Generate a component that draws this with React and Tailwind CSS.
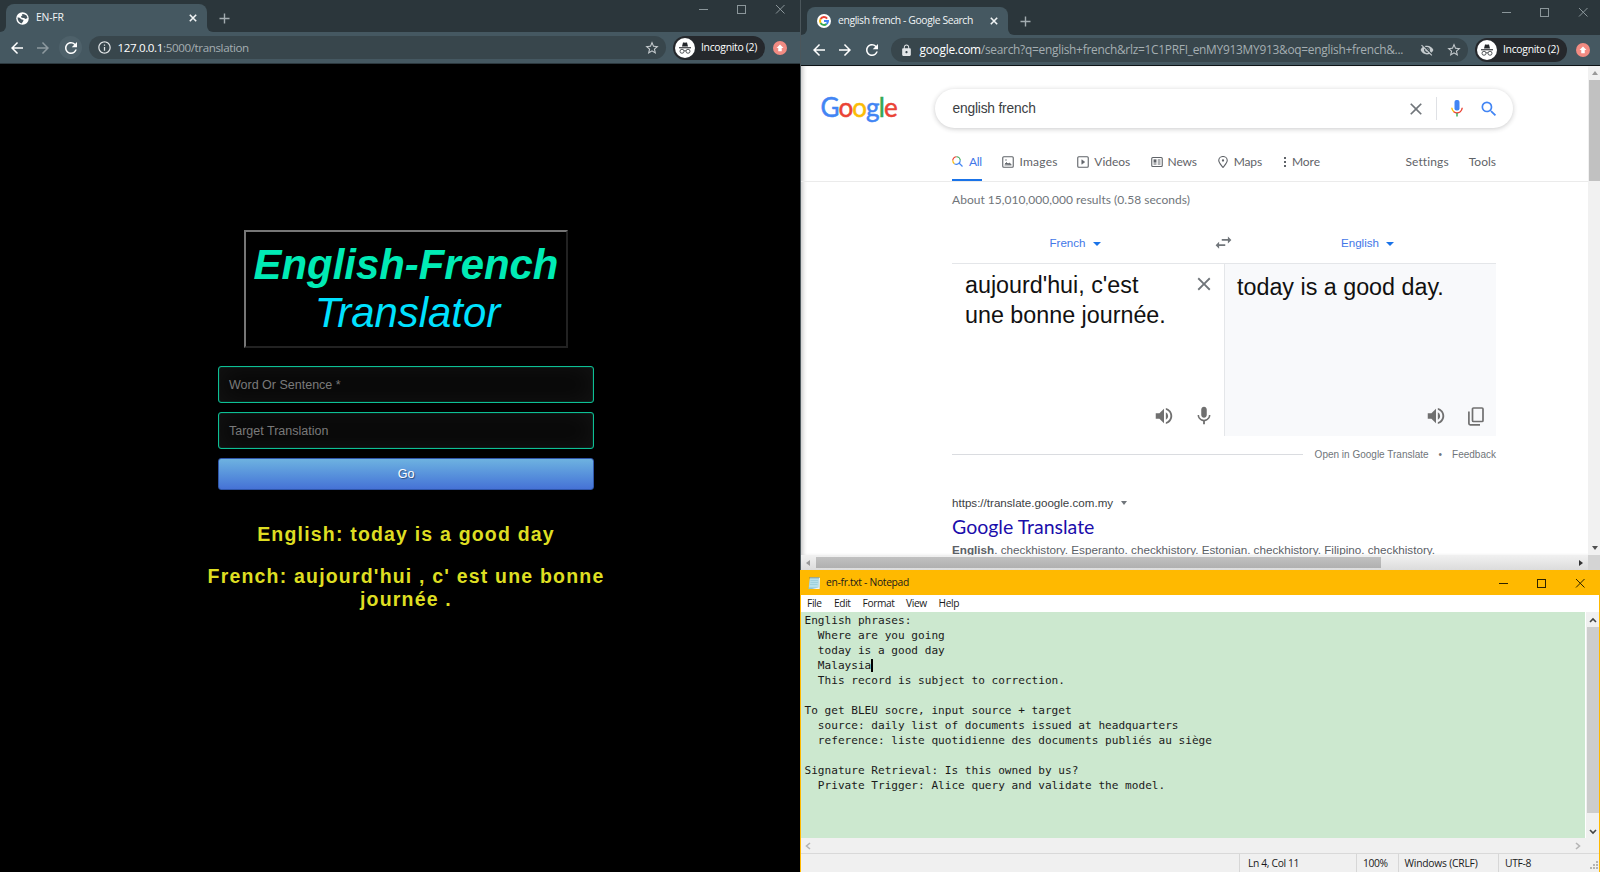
import React from "react";
import {
  MdArrowBack,
  MdArrowForward,
  MdRefresh,
  MdStarBorder,
  MdLock,
  MdInfoOutline,
  MdVisibilityOff,
  MdSearch,
  MdClose,
  MdVolumeUp,
  MdMic,
  MdSwapHoriz,
} from "react-icons/md";

const UI = "font-['Open_Sans','Noto_Sans',sans-serif]";
const ARIAL = "font-['Liberation_Sans',Arial,sans-serif]";
const PRODUCT = "font-[Lato,sans-serif]";

function GlobeIcon() {
  return (
    <svg viewBox="0 0 26 26" className="size-[13px] shrink-0">
      <circle cx="13" cy="13" r="12.5" fill="#fff" />
      <path d="M3 11q4-1 6 2t5 2q2 1 0 4t-3 4C7 22 3 17 3 11z" fill="#45565f" />
      <path d="M12 4q5-1 9 3l2 5-4 2-3-2-5-.5-1-3 3-2z" fill="#45565f" />
    </svg>
  );
}

function GoogleG() {
  return (
    <svg viewBox="0 0 28 28" className="size-[14px] shrink-0">
      <circle cx="14" cy="14" r="14" fill="#fff" />
      <g fill="none" strokeWidth="4">
        <path d="M20.200 9.200A8 8 0 0 0 7.100 10" stroke="#ea4335" />
        <path d="M7.100 10a8 8 0 0 0 0 8" stroke="#fbbc05" />
        <path d="M7.100 18a8 8 0 0 0 12 2" stroke="#34a853" />
        <path d="M19.100 20a8 8 0 0 0 2.900-6h-8" stroke="#4285f4" />
      </g>
    </svg>
  );
}

function IncognitoBadge() {
  return (
    <svg viewBox="0 0 40 40" className="size-5 shrink-0">
      <circle cx="20" cy="20" r="20" fill="#fff" />
      <path d="M14 17l2-8h3l1 .800 1-.8h3l2 8z" fill="#25282c" />
      <path d="M8 19.500h24" stroke="#25282c" strokeWidth="2.200" />
      <g fill="none" stroke="#44484c" strokeWidth="1.800">
        <circle cx="14" cy="26.500" r="4" />
        <circle cx="26" cy="26.500" r="4" />
        <path d="M18 26q2-1.500 4 0" />
      </g>
    </svg>
  );
}

function UpdateBadge() {
  return (
    <svg viewBox="0 0 28 28" className="size-[14px] shrink-0">
      <circle cx="14" cy="14" r="14" fill="#f28b82" />
      <path d="M14 7l7 7h-3.500v6.500h-7V14H7z" fill="#fff" />
    </svg>
  );
}

function WindowButtons({ stroke }) {
  return (
    <svg viewBox="0 0 90 12" className="h-3 w-[90px] shrink-0" fill="none" stroke={stroke} strokeWidth="1">
      <path d="M2 6.500h9" />
      <rect x="40.500" y="2.500" width="8" height="8" />
      <path d="M79 2l8.500 8.500M87.500 2L79 10.500" />
    </svg>
  );
}

function TabStrip({ height, tabTop, plusTop, icon, title, tracking, buttons }) {
  return (
    <div className={`flex shrink-0 items-stretch bg-[#455861] ${height}`}>
      <div className="w-[6px] rounded-br-md bg-[#2b363b]" />
      <div className={`w-[201px] bg-[#2b363b] ${tabTop}`}>
        <div className="flex h-full items-center rounded-t-lg bg-[#455861] pr-[10px] pl-[10px]">
          {icon}
          <span className={`ml-[7px] text-[10.400px] font-medium whitespace-nowrap text-[#f1f4f5] ${tracking}`}>{title}</span>
          <svg viewBox="0 0 8 8" className="ml-auto size-2" stroke="#f1f4f5" strokeWidth="1.600">
            <path d="M.8.8l6.400 6.400M7.200.8L.8 7.200" />
          </svg>
        </div>
      </div>
      <div className="flex grow items-start rounded-bl-md bg-[#2b363b]">
        <svg viewBox="0 0 11 11" className={`ml-[12px] size-[11px] ${plusTop}`} stroke="#a3acb0" strokeWidth="1.400">
          <path d="M5.500.5v10M.5 5.500h10" />
        </svg>
        <div className={`ml-auto ${buttons}`}>
          <WindowButtons stroke="#8b969a" />
        </div>
      </div>
    </div>
  );
}

function IncognitoPill() {
  return (
    <div className="flex h-6 w-[92px] shrink-0 items-center rounded-full bg-[#25282c] pl-[2px]">
      <IncognitoBadge />
      <span className="ml-[6px] text-[10.400px] font-medium tracking-[-0.300px] whitespace-nowrap text-white">Incognito (2)</span>
    </div>
  );
}

const FIELD =
  "flex h-[37px] items-center rounded-[3px] border border-[#0dbf94] bg-[#080808] px-[10px] pt-[2px] text-[#7a7a7a] shadow-[inset_0_0_1px_#0dbf94,inset_0_0_26px_rgba(255,255,255,0.05)]";

function TranslatorWindow() {
  return (
    <section className="flex h-full w-[800px] shrink-0 flex-col bg-black">
      <TabStrip
        height="h-8"
        tabTop="pt-1"
        plusTop="mt-[13px]"
        icon={<GlobeIcon />}
        title="EN-FR"
        tracking="tracking-[-0.200px]"
        buttons="mt-[3px] mr-[13px]"
      />
      <div className="flex h-8 shrink-0 items-center border-b border-[#2c383e] bg-[#455861] pl-[8px]">
        <MdArrowBack className="size-[18px] text-white" />
        <MdArrowForward className="ml-[8px] size-[18px] text-[#8d999f]" />
        <div className="ml-[7px] flex size-[23px] items-center justify-center rounded-full bg-[#4e616a]">
          <MdRefresh className="size-[18px] text-white" />
        </div>
        <div className="ml-[7px] flex h-[23px] w-[577px] items-center rounded-full bg-[#38464c] pl-[8px]">
          <MdInfoOutline className="size-[15px] text-[#dfe3e5]" />
          <span className="ml-[5.500px] text-[11.600px] tracking-[-0.380px] whitespace-nowrap text-[#a5aeb2]">
            <span className="text-white">127.0.0.1</span>:5000/translation
          </span>
          <MdStarBorder className="mr-[6px] ml-auto size-[16px] text-[#c5cbce]" />
        </div>
        <div className="ml-[7px]">
          <IncognitoPill />
        </div>
        <div className="ml-[8px]">
          <UpdateBadge />
        </div>
      </div>

      <main className={`flex grow flex-col items-center pt-[166px] pl-[12px] ${ARIAL}`}>
        <h1 className="h-[118px] w-[324px] border-2 border-t-[#767676] border-r-[#222] border-b-[#222] border-l-[#767676] pt-[9px] text-center text-[41.900px] leading-[48.300px] whitespace-nowrap italic">
          <span className="block font-bold text-[#00ebb5]">English-French</span>
          <span className="ml-[3px] block text-[#00e1ff]">Translator</span>
        </h1>
        <form className="mt-[18px] flex w-[376px] flex-col gap-[9px] text-[12.500px]">
          <div className={FIELD}>Word Or Sentence *</div>
          <div className={FIELD}>Target Translation</div>
          <button
            type="button"
            className="h-8 rounded-[3px] border border-[#2f55a8] bg-linear-to-b from-[#6eb2e0] to-[#4672d6] text-[12.500px] text-white [text-shadow:1px_1px_1px_rgba(0,0,0,0.45)]"
          >
            Go
          </button>
        </form>
        <div className="mt-[32.500px] w-[412px] text-center text-[19.500px] leading-[23px] font-bold tracking-[1.190px] text-[#dede22]">
          <p>English: today is a good day</p>
          <p className="mt-[19px]">French: aujourd'hui , c' est une bonne journée .</p>
        </div>
      </main>
    </section>
  );
}

function GoogleLogo() {
  return (
    <div className={`-mt-[3px] text-[26px] leading-[30px] tracking-[-0.900px] [-webkit-text-stroke:0.5px_currentColor] ${PRODUCT}`}>
      <span className="text-[#4285f4]">G</span>
      <span className="text-[#ea4335]">o</span>
      <span className="text-[#fbbc05]">o</span>
      <span className="text-[#4285f4]">g</span>
      <span className="text-[#34a853]">l</span>
      <span className="text-[#ea4335]">e</span>
    </div>
  );
}

function ColorMic() {
  return (
    <svg viewBox="0 0 24 34" className="h-[17px] w-[12px]" fill="none" strokeWidth="2.800">
      <rect x="7" y="0" width="10" height="21" rx="4" fill="#4285f4" />
      <path d="M1.500 15.500c.5 4 2 6.500 4.500 8.300" stroke="#fbbc05" />
      <path d="M5.500 23.500c4 3 9 3 13 0 2.500-2 3.600-4.500 4-8" stroke="#ea4335" />
      <path d="M12 26v7" stroke="#34a853" />
    </svg>
  );
}

function AllIcon() {
  return (
    <svg viewBox="0 0 22 22" className="size-[11px]" fill="none" strokeWidth="2.400">
      <path d="M1.500 9A7.500 7.500 0 0 1 9 1.500" stroke="#ea4335" />
      <path d="M9 1.500A7.500 7.500 0 0 1 16.500 9" stroke="#34a853" />
      <path d="M1.500 9A7.500 7.500 0 0 0 5 15.300" stroke="#fbbc05" />
      <path d="M16.500 9A7.500 7.500 0 0 1 5 15.300M14.500 14.500l6.500 6.500" stroke="#4285f4" />
    </svg>
  );
}

function TabGlyph({ children }) {
  return (
    <svg viewBox="0 0 24 24" className="size-[12px]" fill="none" stroke="#5f6368" strokeWidth="2.200">
      {children}
    </svg>
  );
}

function SearchTab({ icon, label, className }) {
  return (
    <div className={`flex items-center ${className}`}>
      {icon}
      <span>{label}</span>
    </div>
  );
}

function LanguageLabel({ children }) {
  return (
    <div className="flex items-center gap-[7px] pb-[2px] text-[11.600px] text-[#4277e8]">
      {children}
      <svg viewBox="0 0 8 4" className="mt-[4px] h-1 w-2" fill="#1a73e8">
        <path d="M0 0h8L4 4z" />
      </svg>
    </div>
  );
}

function CopyIcon() {
  return (
    <svg viewBox="0 0 16 19" className="h-[19px] w-4" fill="none" stroke="#707070" strokeWidth="1.700">
      <rect x="4.500" y="1" width="10.500" height="13.500" rx="1" />
      <path d="M.9 4.500V16.500q0 1.300 1.300 1.300H12" />
    </svg>
  );
}

function ResultsPage() {
  return (
    <div className="flex h-[489px] shrink-0 bg-white">
      <div className="flex w-[787px] flex-col overflow-hidden shadow-[inset_4px_0_4px_-2px_rgba(0,0,0,0.22)]">
        <header className="shrink-0 border-b border-[#ebebeb]">
          <div className="flex h-[85px] items-center pl-[19.500px]">
            <GoogleLogo />
            <div className="mr-[75px] ml-auto flex h-[39px] w-[578px] items-center rounded-full bg-white pl-[17.500px] shadow-[0_1px_5px_rgba(32,33,36,0.24)]">
              <span className={`pt-[2px] text-[13.800px] tracking-[-0.200px] text-[#3c4043] ${ARIAL}`}>english french</span>
              <MdClose className="ml-auto size-[20px] text-[#70757a]" />
              <div className="ml-[10px] h-[23px] w-px bg-[#dfe1e5]" />
              <div className="ml-[14px]">
                <ColorMic />
              </div>
              <MdSearch className="mr-[14px] ml-[16px] size-[20px] text-[#4285f4]" />
            </div>
          </div>
          <nav className={`flex h-[30px] text-[12px] text-[#5f6368] ${PRODUCT}`}>
            <div className="ml-[151px] flex border-b-2 border-[#1a73e8] pb-[7px]">
              <SearchTab icon={<AllIcon />} label="All" className="gap-[6px] tracking-[-0.300px] text-[#4277e8]" />
            </div>
            <div className="flex grow pb-[9px]">
              <SearchTab
                className="ml-[20.500px] gap-[5px] tracking-[0.280px]"
                label="Images"
                icon={
                  <TabGlyph>
                    <rect x="1.500" y="1.500" width="21" height="21" rx="2" />
                    <path d="M5 18h14M6 16l3-3 3 3 3-2 3 3z" strokeWidth="1.500" fill="#5f6368" />
                    <path d="M7 8h2" strokeWidth="3" />
                  </TabGlyph>
                }
              />
              <SearchTab
                className="ml-[19.500px] gap-[5px] tracking-[-0.050px]"
                label="Videos"
                icon={
                  <TabGlyph>
                    <rect x="1.500" y="1.500" width="21" height="21" rx="2" />
                    <path d="M9.500 7.500v9l6-4.500z" fill="#5f6368" strokeWidth="1" />
                  </TabGlyph>
                }
              />
              <SearchTab
                className="ml-[20.500px] gap-[5px] tracking-[-0.150px]"
                label="News"
                icon={
                  <TabGlyph>
                    <rect x="1.500" y="3" width="21" height="18" rx="2" />
                    <path d="M5 8h6M5 12h6M5 16h6M13.500 8H19M13.500 12H19M13.500 16H19" strokeWidth="2" />
                    <path d="M8 7.500v5" strokeWidth="5" />
                  </TabGlyph>
                }
              />
              <SearchTab
                className="ml-[20px] gap-[5px] tracking-[-0.200px]"
                label="Maps"
                icon={
                  <TabGlyph>
                    <path d="M12 23C7 16.500 3.500 13 3.500 9a8.500 8 0 0 1 17 0c0 4-3.500 7.500-8.500 14z" />
                    <circle cx="12" cy="9" r="1.200" fill="#5f6368" />
                  </TabGlyph>
                }
              />
              <SearchTab
                className="ml-[22px] gap-[6px] tracking-[-0.050px]"
                label="More"
                icon={
                  <svg viewBox="0 0 2 10" className="h-[10px] w-[2px]" fill="#5f6368">
                    <path d="M0 0h2v2H0zM0 4h2v2H0zM0 8h2v2H0z" />
                  </svg>
                }
              />
              <div className="mr-[92px] ml-auto flex items-center gap-[20px]">
                <span className="tracking-[0.120px]">Settings</span>
                <span>Tools</span>
              </div>
            </div>
          </nav>
        </header>

        <div className={`flex w-[695px] shrink-0 flex-col pl-[151px] ${ARIAL}`}>
          <div className={`mt-[9px] h-[19px] text-[12px] leading-[18px] tracking-[0.030px] whitespace-nowrap text-[#70757a] ${PRODUCT}`}>
            About 15,010,000,000 results (0.58 seconds)
          </div>
          <div className="mt-[14px] flex h-[40px] items-center border-b border-[#e4e6e9]">
            <div className="flex w-[261px] justify-center pr-[15px]">
              <LanguageLabel>French</LanguageLabel>
            </div>
            <MdSwapHoriz className="mb-[2px] size-[21px] text-[#70757a]" />
            <div className="flex grow justify-center pl-[5px]">
              <LanguageLabel>English</LanguageLabel>
            </div>
          </div>
          <div className="flex h-[172px] text-[23.300px] leading-[30px] text-[#111]">
            <div className="flex w-[273px] flex-col border-r border-[#e4e6e9] pt-[6px] pr-[9px] pl-[13px]">
              <div className="flex justify-between whitespace-nowrap">
                <p>
                  aujourd'hui, c'est
                  <br />
                  une bonne journée.
                </p>
                <MdClose className="mt-[3px] size-[22px] text-[#70757a]" />
              </div>
              <div className="mt-auto mb-[9px] flex justify-end gap-[18px] text-[#707070]">
                <MdVolumeUp className="size-[22px]" />
                <MdMic className="size-[22px]" />
              </div>
            </div>
            <div className="flex grow flex-col bg-[#f8f9fb] pt-[8px] pr-[12px] pl-[12px]">
              <p>today is a good day.</p>
              <div className="mt-auto mb-[9px] flex items-center justify-end gap-[21px] text-[#707070]">
                <MdVolumeUp className="size-[22px]" />
                <CopyIcon />
              </div>
            </div>
          </div>
          <div className="mt-[8px] flex h-[20px] items-center text-[10px] whitespace-nowrap text-[#70757a]">
            <div className="mr-[12px] h-px grow bg-[#dadce0]" />
            <span>Open in Google Translate</span>
            <span className="w-[23.500px] text-center">•</span>
            <span>Feedback</span>
          </div>
          <div className="mt-[31px] flex h-[16px] items-center gap-[8px] text-[11.600px] text-[#3c4043]">
            https://translate.google.com.my
            <svg viewBox="0 0 6 4" className="h-1 w-[6px]" fill="#70757a">
              <path d="M0 0h6L3 4z" />
            </svg>
          </div>
          <div className={`mt-[3px] h-[26px] text-[19.500px] leading-[26px] text-[#1a0dab] ${PRODUCT}`}>Google Translate</div>
          <div className="mt-px h-[18px] text-[11.700px] leading-[18px] whitespace-nowrap text-[#5b6066]">
            <b>English</b>. checkhistory. Esperanto. checkhistory. Estonian. checkhistory. Filipino. checkhistory.
          </div>
        </div>
      </div>

      <div className="flex w-3 flex-col items-center bg-[#f1f1f1]">
        <svg viewBox="0 0 6 4" className="my-[5px] ml-[2px] h-1 w-[6px] shrink-0" fill="#9a9a9a">
          <path d="M0 4h6L3 0z" />
        </svg>
        <div className="ml-px h-[101px] w-[11px] shrink-0 bg-[#c1c1c1]" />
        <svg viewBox="0 0 6 4" className="mt-auto mb-[5px] ml-[2px] h-1 w-[6px] shrink-0" fill="#505050">
          <path d="M0 0h6L3 4z" />
        </svg>
      </div>
    </div>
  );
}

function GoogleWindow() {
  return (
    <section className="flex h-[570px] shrink-0 flex-col border-l border-[#4b565b]">
      <TabStrip
        height="h-[35px]"
        tabTop="pt-[7px]"
        plusTop="mt-[16px]"
        icon={<GoogleG />}
        title="english french - Google Search"
        tracking="tracking-[-0.400px]"
        buttons="mt-[6px] mr-[10.500px]"
      />
      <div className="flex h-[31px] shrink-0 items-center border-b border-[#0c1215] bg-[#455861] pl-[9px]">
        <MdArrowBack className="size-[18px] text-white" />
        <MdArrowForward className="ml-[8px] size-[18px] text-white" />
        <MdRefresh className="ml-[9px] size-[18px] text-white" />
        <div className="ml-[10px] flex h-[24px] w-[577px] items-center rounded-full bg-[#38464c] pl-[9px]">
          <MdLock className="size-[13px] text-[#e3e6e8]" />
          <span className="ml-[6.500px] text-[11.900px] tracking-[-0.260px] whitespace-nowrap text-[#a5aeb2]">
            <span className="text-white">google.com</span>
            /search?q=english+french&amp;rlz=1C1PRFI_enMY913MY913&amp;oq=english+french&amp;...
          </span>
          <MdVisibilityOff className="ml-auto size-[14px] text-[#c5cbce]" />
          <MdStarBorder className="mr-[6px] ml-[12px] size-[16px] text-[#c5cbce]" />
        </div>
        <div className="ml-[7px]">
          <IncognitoPill />
        </div>
        <div className="ml-[9px]">
          <UpdateBadge />
        </div>
      </div>
      <ResultsPage />
      <div className="flex h-[15px] items-center bg-linear-to-b from-[#f1f1f1] to-[#dcdcdc]">
        <svg viewBox="0 0 4 6" className="mr-[6px] ml-[5px] h-[6px] w-1" fill="#9a9a9a">
          <path d="M4 0v6L0 3z" />
        </svg>
        <div className="h-[11px] w-[565px] bg-linear-to-b from-[#c1c1c1] to-[#b0b0b0]" />
        <svg viewBox="0 0 4 6" className="mr-[5px] ml-auto h-[6px] w-1" fill="#333">
          <path d="M0 0v6l4-3z" />
        </svg>
        <div className="h-full w-3 bg-[#d4d4d4]" />
      </div>
    </section>
  );
}

function NotepadIcon() {
  return (
    <svg viewBox="0 0 26 28" className="h-[14px] w-[13px]">
      <path d="M4 3h20l-1 23H1z" fill="#8fc3cf" />
      <path d="M4 3h18l-1 20H2z" fill="#b7e0ea" />
      <path d="M5 9h15M5 13h15M4 17h15" stroke="#8fc6d3" strokeWidth="1.200" />
      <path d="M22 4l2 0-1 22H8l13-3z" fill="#f4f4ee" />
      <path d="M4 2v3M8 2v3M12 2v3M16 2v3M20 2v3" stroke="#5d6a6e" strokeWidth="1.500" />
    </svg>
  );
}

const NOTES_BEFORE = `English phrases:
  Where are you going
  today is a good day
  Malaysia`;

const NOTES_AFTER = `
  This record is subject to correction.

To get BLEU socre, input source + target
  source: daily list of documents issued at headquarters
  reference: liste quotidienne des documents publiés au siège

Signature Retrieval: Is this owned by us?
  Private Trigger: Alice query and validate the model.`;

function Chevron({ d, stroke }) {
  return (
    <svg viewBox="0 0 8 8" className="size-2 shrink-0" fill="none" stroke={stroke} strokeWidth="1.600">
      <path d={d} />
    </svg>
  );
}

function NotepadWindow() {
  return (
    <section className="flex grow flex-col border-x border-[#ffb900] bg-[#f0f0f0] text-[#1a1a1a]">
      <div className="flex h-[25px] shrink-0 items-center bg-[#ffb900] pr-[12px] pl-[7px]">
        <NotepadIcon />
        <span className="ml-[5px] text-[10.300px] tracking-[-0.310px] whitespace-nowrap">en-fr.txt - Notepad</span>
        <div className="ml-auto">
          <WindowButtons stroke="#2d2200" />
        </div>
      </div>
      <div className="flex h-[17px] shrink-0 items-center bg-white pt-px pl-[6px] text-[10.200px] tracking-[-0.370px]">
        <span className="w-[27px]">File</span>
        <span className="w-[28.500px]">Edit</span>
        <span className="w-[43.500px]">Format</span>
        <span className="w-[32.500px]">View</span>
        <span>Help</span>
      </div>
      <div className="flex h-[226px] shrink-0 bg-white">
        <pre className="grow bg-[#cce8cf] pt-px pl-[3.500px] font-['DejaVu_Sans_Mono',monospace] text-[11.100px] leading-[15px]">
          {NOTES_BEFORE}
          <span className="inline-block h-[13px] w-[2px] bg-black align-[-3px]" />
          {NOTES_AFTER}
        </pre>
        <div className="ml-px flex w-[13px] flex-col items-center bg-[#f0f0f0]">
          <div className="flex h-[15px] items-center">
            <Chevron d="M1 6l3-3 3 3" stroke="#444" />
          </div>
          <div className="h-[186px] w-[12px] bg-[#cdcdcd]" />
          <div className="mt-auto mb-[2px]">
            <Chevron d="M1 2l3 3 3-3" stroke="#444" />
          </div>
        </div>
      </div>
      <div className="flex h-[16px] shrink-0 items-center justify-between border-b border-[#d9d9d9] pr-[17px] pl-[3px]">
        <Chevron d="M6 1L2.500 4 6 7" stroke="#b5b5b5" />
        <Chevron d="M2 1l3.500 3L2 7" stroke="#b5b5b5" />
      </div>
      <div className="flex grow items-stretch justify-end text-[10.300px] leading-[19px] tracking-[-0.350px] whitespace-nowrap">
        <span className="w-[117px] border-l border-[#d7d7d7] pl-[8px]">Ln 4, Col 11</span>
        <span className="w-[42px] border-l border-[#d7d7d7] pl-[6px]">100%</span>
        <span className="w-[100px] border-l border-[#d7d7d7] pl-[5.500px] tracking-[-0.220px]">Windows (CRLF)</span>
        <span className="w-[92px] border-l border-[#d7d7d7] pl-[6px]">UTF-8</span>
        <svg viewBox="0 0 9 9" className="mt-auto mb-[3px] size-[9px]" fill="#b4b4b4">
          <path d="M6 0h2v2H6zM3 3h2v2H3zM6 3h2v2H6zM0 6h2v2H0zM3 6h2v2H3zM6 6h2v2H6z" />
        </svg>
      </div>
    </section>
  );
}

export default function App() {
  return (
    <div className={`flex h-[872px] w-[1600px] overflow-hidden bg-black ${UI}`}>
      <TranslatorWindow />
      <div className="flex h-full w-[800px] shrink-0 flex-col">
        <GoogleWindow />
        <NotepadWindow />
      </div>
    </div>
  );
}
